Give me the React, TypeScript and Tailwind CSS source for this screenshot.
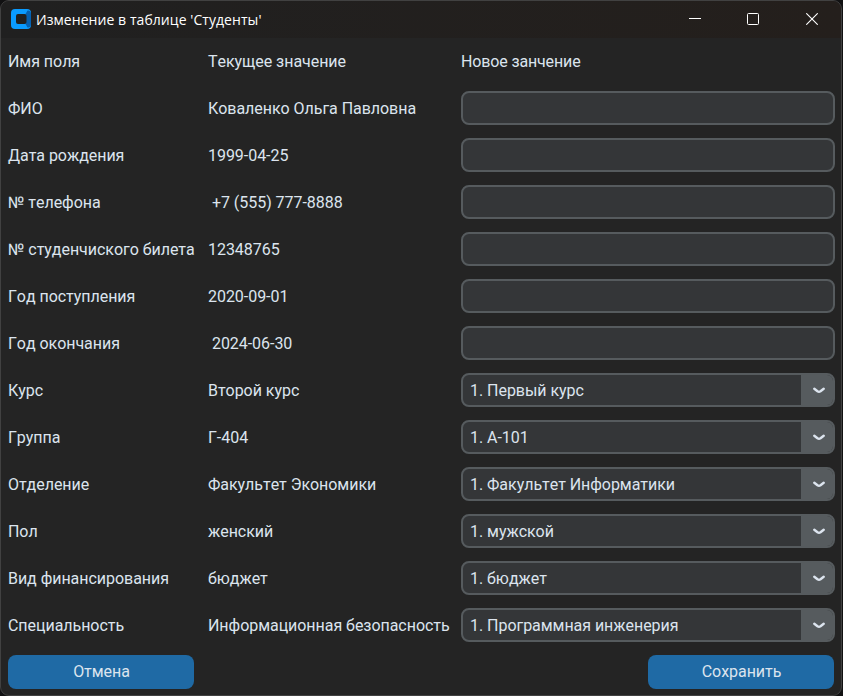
type Row = { name: string; current: string; option?: string };

const rows: Row[] = [
  { name: 'ФИО', current: 'Коваленко Ольга Павловна' },
  { name: 'Дата рождения', current: '1999-04-25' },
  { name: '№ телефона', current: ' +7 (555) 777-8888' },
  { name: '№ студенчиского билета', current: '12348765' },
  { name: 'Год поступления', current: '2020-09-01' },
  { name: 'Год окончания', current: ' 2024-06-30' },
  { name: 'Курс', current: 'Второй курс', option: '1. Первый курс' },
  { name: 'Группа', current: 'Г-404', option: '1. А-101' },
  { name: 'Отделение', current: 'Факультет Экономики', option: '1. Факультет Информатики' },
  { name: 'Пол', current: 'женский', option: '1. мужской' },
  { name: 'Вид финансирования', current: 'бюджет', option: '1. бюджет' },
  { name: 'Специальность', current: 'Информационная безопасность', option: '1. Программная инженерия' },
];

function TitleBar() {
  return (
    <header className="flex h-[37px] shrink-0 items-center bg-linear-to-r from-[#202020] to-[#241f1c] pl-[10px] text-white">
      <svg width="20" height="20" viewBox="0 0 20 20" className="mb-px shrink-0">
        <rect width="20" height="20" rx="4" fill="#0a9bff" />
        <path d="M16.500 1.500Q20 1 20 5V15Q20 19 16.500 18.500L14.500 15V5Z" fill="#0560b0" />
        <rect x="5" y="5" width="10.500" height="10" rx="2" fill="#202020" />
      </svg>
      <h1 className="ml-[5px] whitespace-pre font-['Open_Sans','Noto_Sans',sans-serif] text-[14px] leading-5 tracking-[0.06px]">Изменение в таблице 'Студенты'</h1>
      <div className="mr-[23px] mb-px ml-auto flex items-center gap-[46px]">
        <svg width="12" height="12" viewBox="0 0 12 12"><path d="M0 5.5H12" stroke="white" /></svg>
        <svg width="12" height="12" viewBox="0 0 12 12"><rect x=".5" y=".5" width="11" height="11" rx="1" fill="none" stroke="white" /></svg>
        <svg width="12" height="12" viewBox="0 0 12 12" className="ml-px"><path d="M.3.3 11.7 11.7M11.7.3.3 11.7" stroke="white" strokeWidth="1.1" /></svg>
      </div>
    </header>
  );
}

function Field({ option }: { option?: string }) {
  if (!option) {
    return <input className="h-[34px] w-[374px] rounded-[8px] border-2 border-[#565b5e] bg-[#343638] px-2 outline-none" />;
  }
  return (
    <button className="flex h-[34px] w-[374px] overflow-hidden rounded-[8px] border-2 border-[#565b5e] bg-[#343638] text-left">
      <span className="flex-1 pl-[7px] leading-[32px]">{option}</span>
      <span className="flex h-full w-[32px] items-center justify-center bg-[#565b5e] pt-px pl-[4px]">
        <svg width="12" height="7" viewBox="0 0 12 7" fill="none" stroke="#dce4ee" strokeWidth="2.4" strokeLinecap="round" strokeLinejoin="round">
          <path d="M1.300 1.800 4.500 4.300Q6 5.300 7.500 4.300L10.700 1.800" />
        </svg>
      </span>
    </button>
  );
}

export default function App() {
  return (
    <div className="h-[696px] w-[843px] bg-[#111112] pr-px">
      <div className="flex h-full flex-col overflow-hidden rounded-[9px] border border-[#414141] bg-[#242424] font-[Roboto,sans-serif] text-[16px] text-[#dce4ee]">
        <TitleBar />
        <main className="pl-[7px] tracking-[-0.04px] [font-kerning:none]">
          <div className="grid h-[47px] grid-cols-[200px_253px_374px] pt-[6px] leading-[36px]">
            <span>Имя поля</span>
            <span>Текущее значение</span>
            <span className="tracking-[-0.14px]">Новое занчение</span>
          </div>
          {rows.map((row) => (
            <div key={row.name} className="grid h-[47px] grid-cols-[200px_253px_374px] pt-[6px] leading-[36px] whitespace-pre">
              <span>{row.name}</span>
              <span>{row.current}</span>
              <Field option={row.option} />
            </div>
          ))}
          <div className="flex w-[826px] justify-between pt-[6px]">
            <button className="h-[34px] w-[186px] rounded-[8px] bg-[#1f6aa5] pl-px">Отмена</button>
            <button className="h-[34px] w-[186px] rounded-[8px] bg-[#1f6aa5] pl-px">Сохранить</button>
          </div>
        </main>
      </div>
    </div>
  );
}
